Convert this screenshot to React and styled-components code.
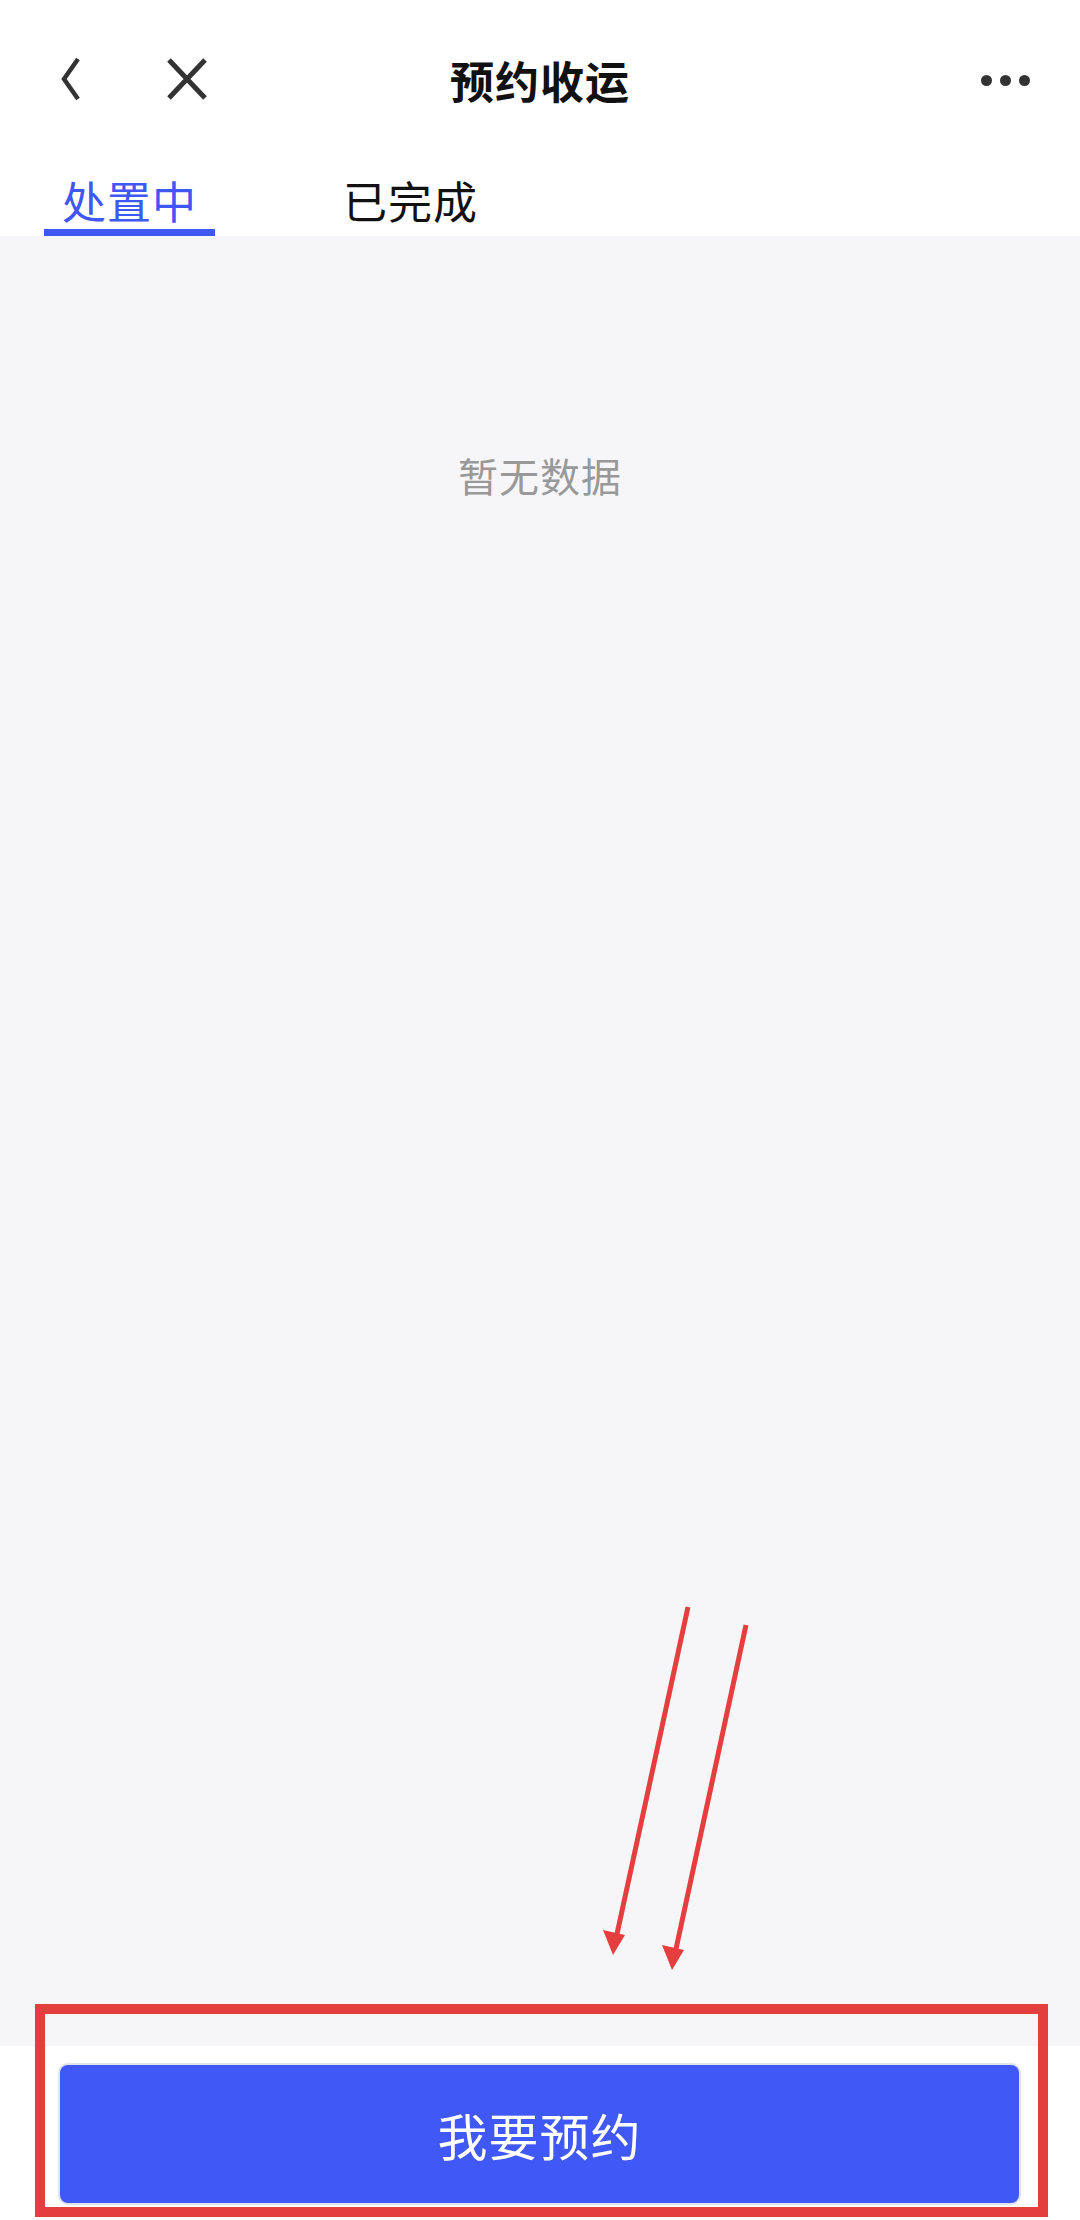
import React, { useState } from 'react';
import styled, { createGlobalStyle } from 'styled-components';

const GlobalStyle = createGlobalStyle`
    html, body {
        margin: 0;
        padding: 0;
        background: #fff;
        font-family: "Noto Sans CJK SC", "Noto Sans", sans-serif;
    }
    * { box-sizing: border-box; }
`;

export default function App(){
    const [tab, setTab] = useState(0);
    const tabs = ['处置中', '已完成'];
    return (
    <Page>
        <GlobalStyle />
        <NavBar>
            <NavLeft>
                <IconButton>
                    <svg width="26" height="46" viewBox="0 0 26 46">
                        <path d="M20 3 L6 23 L20 43" fill="none" stroke="#333" strokeWidth="4.5" />
                    </svg>
                </IconButton>
                <IconButton>
                    <svg width="42" height="44" viewBox="0 0 42 44">
                        <path d="M3 3 L39 41 M39 3 L3 41" fill="none" stroke="#333" strokeWidth="5" />
                    </svg>
                </IconButton>
            </NavLeft>
            <Title>预约收运</Title>
            <More>
                <Dot /><Dot /><Dot />
            </More>
        </NavBar>
        <Tabs>
            {tabs.map((t, i) => (
                <Tab key={t} active={i === tab} onClick={() => setTab(i)}>{t}</Tab>
            ))}
        </Tabs>
        <Content>
            <Empty>暂无数据</Empty>
        </Content>
        <Footer>
            <Button>我要预约</Button>
        </Footer>
        {/* annotation arrows */}
        <Arrows width="1080" height="2220" viewBox="0 0 1080 2220">
            <line x1="688" y1="1607" x2="617" y2="1934" stroke="#e53e3e" strokeWidth="5" />
            <path d="M603 1930 L625 1935 L613 1955 Z" fill="#e53e3e" />
            <line x1="746" y1="1625" x2="676" y2="1949" stroke="#e53e3e" strokeWidth="5" />
            <path d="M662 1945 L684 1950 L672 1970 Z" fill="#e53e3e" />
        </Arrows>
        <Highlight />
    </Page>
    )
}

const Page = styled.div`
    position: relative;
    width: 1080px;
    min-height: 2220px;
    display: flex;
    flex-direction: column;
    background: #fff;
    overflow: hidden;
`;

const NavBar = styled.div`
    height: 160px;
    display: flex;
    align-items: center;
    justify-content: space-between;
    padding: 0 50px 0 58px;
    position: relative;
`;

const NavLeft = styled.div`
    display: flex;
    align-items: center;
    gap: 82px;
    padding-bottom: 2px;
`;

const IconButton = styled.div`
    display: flex;
    align-items: center;
    justify-content: center;
    cursor: pointer;
`;

const Title = styled.div`
    position: absolute;
    left: 0;
    right: 0;
    text-align: center;
    font-size: 44px;
    font-weight: 700;
    color: #111;
    pointer-events: none;
    letter-spacing: 1px;
`;

const More = styled.div`
    display: flex;
    gap: 8px;
    align-items: center;
`;

const Dot = styled.span`
    width: 11px;
    height: 11px;
    border-radius: 50%;
    background: #333;
`;

const Tabs = styled.div`
    height: 76px;
    display: flex;
    padding-left: 44px;
    gap: 110px;
`;

const Tab = styled.div`
    width: 171px;
    display: flex;
    align-items: flex-start;
    justify-content: center;
    font-size: 44px;
    line-height: 48px;
    padding-top: 16px;
    color: ${p => p.active ? '#3f57f5' : '#111'};
    border-bottom: 7px solid ${p => p.active ? '#3f57f5' : 'transparent'};
    cursor: pointer;
    letter-spacing: 1px;
`;

const Content = styled.div`
    flex: 1;
    background: #f6f6f8;
    display: flex;
    justify-content: center;
    align-items: flex-start;
    padding-top: 210px;
`;

const Empty = styled.div`
    font-size: 40px;
    color: #999;
    letter-spacing: 1px;
`;

const Footer = styled.div`
    height: 174px;
    padding: 19px 61px 17px 60px;
    background: #fff;
`;

const Button = styled.div`
    height: 138px;
    background: #3f58f6;
    border-radius: 8px;
    box-shadow: 0 0 0 2px #dfe3ee;
    color: #fff;
    font-size: 50px;
    letter-spacing: 1px;
    display: flex;
    align-items: center;
    justify-content: center;
    cursor: pointer;
`;

const Arrows = styled.svg`
    position: absolute;
    left: 0;
    top: 0;
    pointer-events: none;
`;

const Highlight = styled.div`
    position: absolute;
    left: 35px;
    top: 2004px;
    width: 1013px;
    height: 213px;
    border: 10px solid #e53e3e;
    pointer-events: none;
`;
